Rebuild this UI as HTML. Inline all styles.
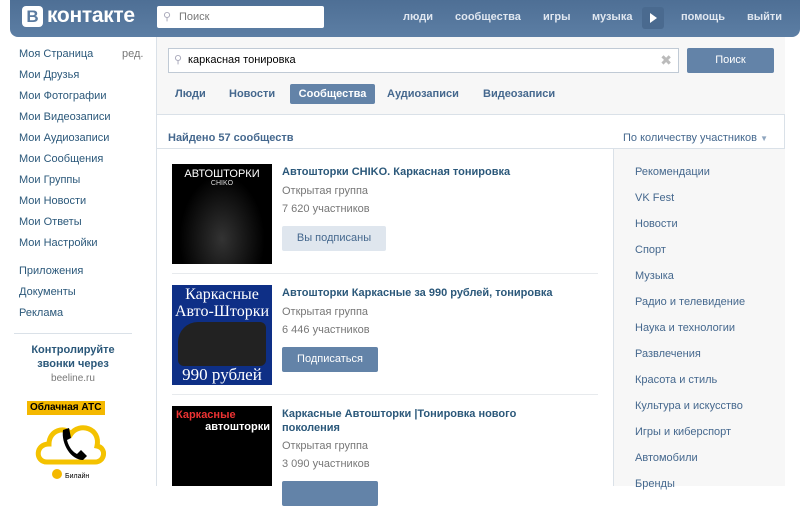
<!DOCTYPE html>
<html><head><meta charset="utf-8"><style>
*{margin:0;padding:0;box-sizing:border-box}
body{width:803px;height:486px;overflow:hidden;background:#fff;font-family:Tahoma,"Liberation Sans","Noto Sans CJK SC",sans-serif;font-size:11px;color:#000;position:relative}
div{white-space:nowrap}
.hdr{position:absolute;left:10px;top:0;width:790px;height:37px;background:linear-gradient(#4e6f95,#5c7ea4);border-radius:0 0 8px 8px}
.logo{position:absolute;left:22px;top:6px;width:21px;height:21px;background:#fff;border-radius:4px;color:#5b7ba0;font-weight:bold;font-size:17px;text-align:center;line-height:21px;font-family:"Liberation Sans",sans-serif}
.logot{position:absolute;left:47px;top:4px;color:#fff;font-weight:bold;font-size:21px;font-family:"Liberation Sans",sans-serif;letter-spacing:-0.3px}
.hs{position:absolute;left:157px;top:6px;width:167px;height:22px;background:#fff;border-radius:2px;color:#777;font-size:11px;line-height:22px;padding-left:22px}
.nav{position:absolute;top:11px;color:#e0e7f0;font-weight:bold;font-size:11px}
.play{position:absolute;left:642px;top:7px;width:22px;height:22px;background:#4a6a8f;border-radius:3px}
.play:after{content:"";position:absolute;left:8px;top:6px;border-left:7px solid #fff;border-top:5px solid transparent;border-bottom:5px solid transparent}
.lm a{position:absolute;left:19px;color:#2b587a;font-size:11px;text-decoration:none}
.main{position:absolute;left:156px;top:37px;width:629px;height:449px;border-left:1px solid #dae1e8;border-right:1px solid #dae1e8}
.sbar{position:absolute;left:0;top:0;width:628px;height:78px;background:#f7f7f7;border-bottom:1px solid #dae1e8}
.inp{position:absolute;left:11px;top:11px;width:511px;height:25px;background:#fff;border:1px solid #c0cad5;line-height:23px;padding-left:19px;font-size:11px}
.btn{position:absolute;background:#6383a8;color:#fff;text-align:center;border-radius:2px}
.tab{position:absolute;top:51px;color:#45688e;font-weight:bold;font-size:11px}
.found{position:absolute;left:11px;top:95px;font-weight:bold;color:#45688e;font-size:11px}
.sort{position:absolute;left:466px;top:95px;color:#45688e;font-size:11px}
.rcol{position:absolute;left:456px;top:111px;width:172px;height:338px;background:#f7f7f7;border-left:1px solid #dae1e8;border-top:1px solid #dae1e8}
.rcol div{position:absolute;left:21px;color:#45688e;font-size:11px}
.line{position:absolute;left:0;top:111px;width:456px;border-top:1px solid #dae1e8}
.it{position:absolute;left:15px;width:430px;height:110px}
.img{position:absolute;left:0;top:0;width:100px;height:100px}
.t{position:absolute;left:110px;top:1px;font-weight:bold;color:#2b587a;font-size:11px;width:280px;line-height:14px;white-space:normal}
.g{position:absolute;left:110px;color:#777;font-size:11px}
.sep{position:absolute;left:15px;width:426px;border-top:1px solid #e7eaed}
</style></head><body>
<div class="hdr"></div>
<div class="logo">В</div><div class="logot">контакте</div>
<div class="hs"><span style="position:absolute;left:6px;top:0;color:#aab">⚲</span>Поиск</div>
<div class="nav" style="left:403px">люди</div>
<div class="nav" style="left:455px">сообщества</div>
<div class="nav" style="left:543px">игры</div>
<div class="nav" style="left:592px">музыка</div>
<div class="play"></div>
<div class="nav" style="left:681px">помощь</div>
<div class="nav" style="left:747px">выйти</div>

<div class="lm">
<a style="top:48px">Моя Страница</a><a style="top:48px;left:122px;color:#777">ред.</a>
<a style="top:69px">Мои Друзья</a>
<a style="top:90px">Мои Фотографии</a>
<a style="top:111px">Мои Видеозаписи</a>
<a style="top:132px">Мои Аудиозаписи</a>
<a style="top:153px">Мои Сообщения</a>
<a style="top:174px">Мои Группы</a>
<a style="top:195px">Мои Новости</a>
<a style="top:216px">Мои Ответы</a>
<a style="top:237px">Мои Настройки</a>
<a style="top:265px">Приложения</a>
<a style="top:286px">Документы</a>
<a style="top:307px">Реклама</a>
</div>
<div style="position:absolute;left:14px;top:333px;width:118px;border-top:1px solid #dae1e8"></div>
<div style="position:absolute;left:14px;top:343px;width:118px;text-align:center;color:#2b587a;font-weight:bold;font-size:11px;line-height:14px">Контролируйте<br>звонки через</div>
<div style="position:absolute;left:14px;top:373px;width:118px;text-align:center;color:#777;font-size:10px">beeline.ru</div>
<div style="position:absolute;left:27px;top:401px;width:78px;height:14px;background:#f4b800;font-weight:bold;font-size:10px;line-height:14px;padding-left:3px">Облачная АТС</div>
<svg style="position:absolute;left:35px;top:416px" width="72" height="66"><path d="M12 46 C0 46 0 28 14 28 C14 14 30 10 36 18 C44 6 66 12 62 30 C72 32 70 46 60 46 Z" fill="none" stroke="#f4c200" stroke-width="5"/><path d="M28 14 L34 12 L36 22 L32 24 C34 32 38 36 42 38 L46 34 L52 40 L48 44 C36 44 26 28 28 14Z" fill="#000"/><circle cx="22" cy="58" r="5" fill="#f4b800"/><text x="30" y="62" font-size="7" font-family="Liberation Sans">Билайн</text></svg>

<div class="main">
<div class="sbar">
<div class="inp"><span style="position:absolute;left:5px;color:#aab">⚲</span>каркасная тонировка<span style="position:absolute;right:6px;top:0;color:#bbb;font-size:14px">✖</span></div>
<div class="btn" style="left:530px;top:11px;width:87px;height:25px;line-height:25px">Поиск</div>
<div class="tab" style="left:18px">Люди</div>
<div class="tab" style="left:72px">Новости</div>
<div class="btn" style="left:133px;top:47px;width:85px;height:20px;line-height:20px;font-weight:bold">Сообщества</div>
<div class="tab" style="left:230px">Аудиозаписи</div>
<div class="tab" style="left:326px">Видеозаписи</div>
</div>
<div class="found">Найдено 57 сообществ</div>
<div class="sort">По количеству участников <span style="color:#8fa6bf;font-size:8px">▼</span></div>
<div class="line"></div>
<div class="rcol">
<div style="top:17px">Рекомендации</div><div style="top:43px">VK Fest</div><div style="top:69px">Новости</div><div style="top:95px">Спорт</div><div style="top:121px">Музыка</div><div style="top:147px">Радио и телевидение</div><div style="top:173px">Наука и технологии</div><div style="top:199px">Развлечения</div><div style="top:225px">Красота и стиль</div><div style="top:251px">Культура и искусство</div><div style="top:277px">Игры и киберспорт</div><div style="top:303px">Автомобили</div><div style="top:329px">Бренды</div>
</div>

<div class="it" style="top:127px">
<div class="img" style="background:radial-gradient(ellipse at 50% 75%,#333,#000 60%)"><div style="color:#fff;text-align:center;font-size:11px;margin-top:4px">АВТОШТОРКИ</div><div style="color:#ddd;text-align:center;font-size:7px">CHIKO</div></div>
<div class="t">Автошторки CHIKO. Каркасная тонировка</div>
<div class="g" style="top:21px">Открытая группа</div>
<div class="g" style="top:39px">7 620 участников</div>
<div class="btn" style="left:110px;top:62px;width:104px;height:25px;line-height:25px;background:#dfe6ee;color:#45688e">Вы подписаны</div>
</div>
<div class="sep" style="top:236px"></div>
<div class="it" style="top:248px">
<div class="img" style="background:#0e2f86;color:#fff;font-family:'Liberation Serif',serif;text-align:center;font-size:16px;line-height:17px;padding-top:1px">Каркасные<br>Авто-Шторки<div style="height:44px;background:#222;margin:2px 6px 0;border-radius:20px 6px 6px 6px"></div><div style="font-size:17px">990 рублей</div></div>
<div class="t" style="width:300px">Автошторки Каркасные за 990 рублей, тонировка</div>
<div class="g" style="top:21px">Открытая группа</div>
<div class="g" style="top:39px">6 446 участников</div>
<div class="btn" style="left:110px;top:62px;width:96px;height:25px;line-height:25px">Подписаться</div>
</div>
<div class="sep" style="top:357px"></div>
<div class="it" style="top:369px">
<div class="img" style="background:#000;height:80px"><div style="color:#e33;font-weight:bold;font-size:11px;padding:3px 4px 0">Каркасные</div><div style="color:#fff;font-weight:bold;font-size:11px;text-align:right;padding-right:2px">автошторки</div></div>
<div class="t" style="width:270px">Каркасные Автошторки |Тонировка нового поколения</div>
<div class="g" style="top:34px">Открытая группа</div>
<div class="g" style="top:52px">3 090 участников</div>
<div class="btn" style="left:110px;top:75px;width:96px;height:25px"></div>
</div>
</div>
</body></html>
